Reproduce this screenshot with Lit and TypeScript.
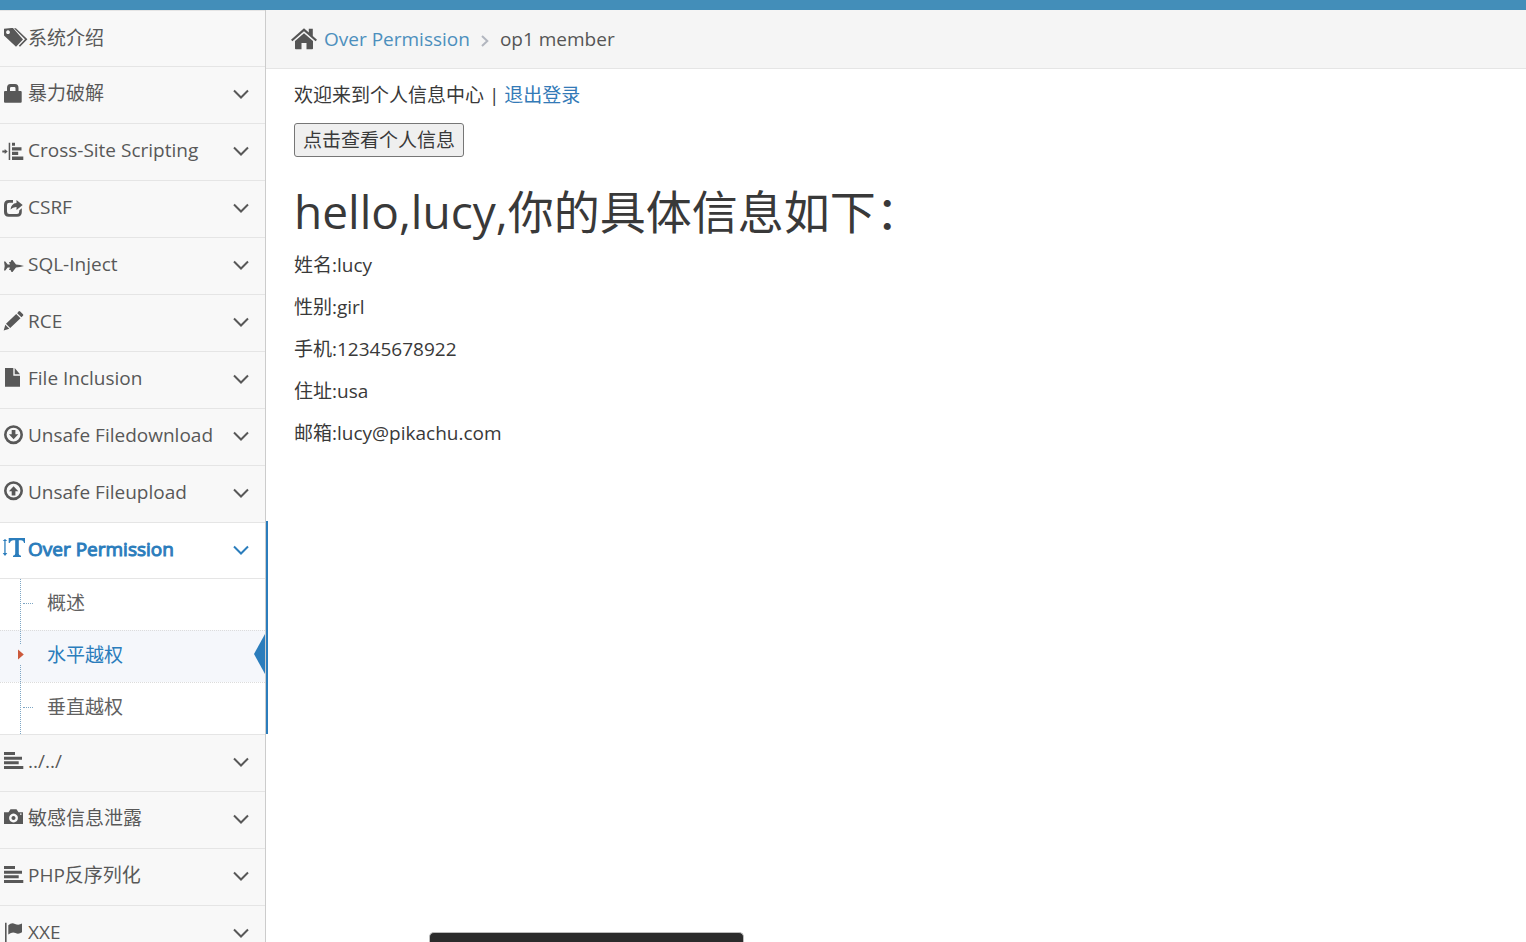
import { LitElement, html, svg, css, nothing, SVGTemplateResult } from "lit";
import { customElement, property } from "lit/decorators.js";
import { classMap } from "lit/directives/class-map.js";

const bars = svg`<path d="M4 1h11v3H4zM4 5.700h18v3H4zM4 10.300h14.700v3H4zM4 15h19.300v3H4z"/>`;

const icons: Record<string, SVGTemplateResult> = {
  tags: svg`<path fill-rule="evenodd" d="M4 .8 11.500 0H13L23 11.500 16 18.800 4 7.500zM8 2.300a1.900 1.900 0 1 0 .01 0z"/>
    <path d="M14 .3h1.900l11.500 11-7.400 7.500-1.200-1.100 6.200-6.400z"/>`,
  lock: svg`<path fill-rule="evenodd" d="M5 8h2V5q0-4 3.500-4h4.500Q18.500 1 18.500 5v3h2.200q1 0 1 1v9.700q0 1-1 1H5q-1 0-1-1V9q0-1 1-1zM10 8h5.500V5.300q0-1.300-1.200-1.300h-3.100Q10 4 10 5.300z"/>`,
  indent: svg`<path d="M8.700 2.700h1.500V20H8.700zM12 2.700h3v3h-3zM12 7.200h9.500v3.200H12zM12 11.800h6.200v3.200H12zM12 16.600h11.300V20H12zM2.300 10.500h2.400V9l3 2.500-3 2.500v-1.500H2.300z"/>`,
  share: svg`<path d="M13 3v2.800H9.200Q7 5.800 7 8v6.500Q7 17 9.200 17H17q2.200 0 2.200-2.200V13.500l2.600-2.200V15q0 4.700-4.700 4.700H8.700Q4 19.700 4 15V7.700Q4 3 8.700 3z"/>
    <path d="M16.500 3 22.700 8l-6.200 5v-3q-3.500-.2-6 2.500.7-6 6-6.500z"/>`,
  plane: svg`<path d="M4 7.500h1.300L7.700 10.500H10L9 8h1.500l1-2h1l3.500 4.600 4 .3 4 1.100-4 1.100-4 .3L12.500 18h-1l-1-2H9l1-2.500H7.700l-2.400 3H4l.7-4.500z"/>`,
  pencil: svg`<path d="M18.500.4Q19.300-.3 20.200.5L23 3.300q.7.800 0 1.500L21.400 6.300 17.200 2.200zM16.200 3.100l4.300 4.200L10.200 17 6 12.800zM5.300 13.700l4 4L3.700 19.500z"/>`,
  file: svg`<path d="M5 0h8.300v7.700H20v11H5zM14.700 0 20 6.300h-5.300z"/>`,
  download: svg`<circle cx="13.500" cy="9.700" r="8.200" fill="none" stroke="currentColor" stroke-width="2.600"/><path d="M11.700 5h3.700v4.300h2.900l-4.700 5-4.700-5h2.800z"/>`,
  upload: svg`<circle cx="13.500" cy="8.700" r="8.200" fill="none" stroke="currentColor" stroke-width="2.600"/><path d="M11.700 13.500h3.700V9.200h2.900l-4.700-5-4.700 5h2.800z"/>`,
  height: svg`<path d="M4.300 2v12H2.700L5 17l2.300-3H5.600V2h1.700L5 0 2.700 2zM8.700-1H25v5h-1q-.5-2.800-3-2.800h-2.200v13.600q0 1.700 2.200 1.900V18h-8v-1.300q2.200-.2 2.200-1.900V1.200H13Q10.500 1.200 9.700 4h-1z"/>`,
  bars,
  camera: svg`<path fill-rule="evenodd" d="M4 4.300h4.500l2-3h6l2 3H23V16H4zM13.500 5.600a4.400 4.400 0 1 0 .01 0zM13.500 8a2 2 0 1 1-.01 0zM20 5.500v1.300h1.500V5.500z"/>`,
  flag: svg`<path d="M5 .7h1.600V20H5zM8.300 3.200q3.200-3 6.700-1.300t7-.3v8.700q-3.300 2.200-6.500.8t-7.200 1.300z"/>`,
};

interface Entry {
  label: string;
  icon: string;
  leaf?: boolean;
  children?: { label: string; current?: boolean }[];
}

const entries: Entry[] = [
  { label: "系统介绍", icon: "tags", leaf: true },
  { label: "暴力破解", icon: "lock" },
  { label: "Cross-Site Scripting", icon: "indent" },
  { label: "CSRF", icon: "share" },
  { label: "SQL-Inject", icon: "plane" },
  { label: "RCE", icon: "pencil" },
  { label: "File Inclusion", icon: "file" },
  { label: "Unsafe Filedownload", icon: "download" },
  { label: "Unsafe Fileupload", icon: "upload" },
  {
    label: "Over Permission",
    icon: "height",
    children: [{ label: "概述" }, { label: "水平越权", current: true }, { label: "垂直越权" }],
  },
  { label: "../../", icon: "bars" },
  { label: "敏感信息泄露", icon: "camera" },
  { label: "PHP反序列化", icon: "bars" },
  { label: "XXE", icon: "flag" },
];

@customElement("side-menu")
class SideMenu extends LitElement {
  @property({ attribute: false }) entries: Entry[] = [];

  static styles = css`
    :host {
      display: block;
      background: #f8f8f8;
      border-right: 1px solid #ccc;
      color: #585858;
    }
    ul {
      list-style: none;
      margin: 0;
      padding: 0;
    }
    a {
      color: inherit;
      text-decoration: none;
    }
    .menu {
      border-top: 1px solid #e5e5e5;
    }
    .item {
      position: relative;
      border-bottom: 1px solid #e5e5e5;
    }
    .head {
      display: flex;
      align-items: center;
      padding: 14px 16px 18px 0;
      line-height: 24px;
    }
    .item:first-child .head {
      padding: 15px 16px 16px 0;
    }
    .icon {
      flex: none;
      width: 28px;
      height: 24px;
      overflow: visible;
      fill: currentColor;
    }
    .label {
      flex: 1;
    }
    .arrow {
      flex: none;
      width: 16px;
      height: 24px;
      fill: none;
      stroke: currentColor;
      stroke-width: 2;
    }
    .open {
      background: #fff;
    }
    .open::after {
      content: "";
      position: absolute;
      z-index: 1;
      top: -2px;
      bottom: 0;
      right: -3px;
      width: 2px;
      background: #2b7dbc;
    }
    .open .head {
      padding-bottom: 17px;
      color: #2b7dbc;
    }
    .open .label {
      -webkit-text-stroke: 1px currentColor;
    }
    .sub {
      position: relative;
      border-top: 1px solid #e5e5e5;
    }
    .sub::before {
      content: "";
      position: absolute;
      z-index: 1;
      top: 0;
      bottom: 0;
      left: 20px;
      border-left: 1px dotted #7ea6c4;
    }
    .leaf {
      position: relative;
      color: #616161;
    }
    .leaf + .leaf {
      border-top: 1px dotted #dcdcdc;
    }
    .leaf a {
      display: block;
      padding: 12px 0 15px 47px;
      line-height: 24px;
    }
    .leaf::before {
      content: "";
      position: absolute;
      top: 24px;
      left: 23px;
      width: 10px;
      border-top: 1px dotted #7ea6c4;
    }
    .current {
      background: #f5f7fb;
      color: #2b7dbc;
    }
    .current::before {
      display: none;
    }
    .caret {
      position: absolute;
      z-index: 2;
      top: 14px;
      left: 17px;
      width: 7px;
      height: 20px;
      background: #f5f7fb;
      fill: #cc5a3c;
    }
    .pointer {
      position: absolute;
      top: 3px;
      right: 0;
      width: 11px;
      height: 40px;
      fill: #2b7dbc;
    }
  `;

  private renderEntry(entry: Entry) {
    return html`<li class=${classMap({ item: true, open: !!entry.children })}>
      <a class="head" href="#">
        <svg class="icon" viewBox="0 -2 28 24" aria-hidden="true">${icons[entry.icon]}</svg>
        <span class="label">${entry.label}</span>
        ${entry.leaf
          ? nothing
          : html`<svg class="arrow" viewBox="0 0 16 24" aria-hidden="true">
              <path d="M1 9.500 8 16.500 15 9.500" />
            </svg>`}
      </a>
      ${entry.children
        ? html`<ul class="sub">
            ${entry.children.map(
              (c) => html`<li class=${classMap({ leaf: true, current: !!c.current })}>
                <a href="#">${c.label}</a>
                ${c.current
                  ? html`<svg class="caret" viewBox="0 0 7 20" aria-hidden="true"><path d="M1 4.500 6.800 9.500 1 14.500z" /></svg>
                      <svg class="pointer" viewBox="0 0 11 40" aria-hidden="true"><path d="M11 0v40L0 20z" /></svg>`
                  : nothing}
              </li>`
            )}
          </ul>`
        : nothing}
    </li>`;
  }

  render() {
    return html`<nav aria-label="Menu">
      <ul class="menu">
        ${this.entries.map((e) => this.renderEntry(e))}
      </ul>
    </nav>`;
  }
}

@customElement("app-root")
class AppRoot extends LitElement {
  static styles = css`
    :host {
      display: flex;
      flex-direction: column;
      height: 100vh;
      overflow: hidden;
      background: #fff;
      color: #393939;
      font-family: "Open Sans", "Noto Sans CJK SC", sans-serif;
      font-size: 19px;
      line-height: 28px;
    }
    .topbar {
      flex: none;
      height: 10px;
      background: #438eb9;
    }
    .shell {
      flex: 1;
      min-height: 0;
      display: grid;
      grid-template-columns: 266px 1fr;
    }
    .crumbs {
      display: flex;
      align-items: center;
      padding: 15px 25px;
      background: #f5f5f5;
      border-bottom: 1px solid #e5e5e5;
      color: #555;
    }
    .home {
      width: 26px;
      height: 22px;
      margin-right: 7px;
      fill: #555;
    }
    .crumbs a {
      color: #4c8fbd;
      text-decoration: none;
    }
    .sep {
      width: 8px;
      height: 12px;
      margin: 4px 11px 0;
      fill: none;
      stroke: #b2b6bf;
      stroke-width: 2;
    }
    .content {
      padding: 12px 28px;
    }
    .content a {
      color: #337ab7;
      text-decoration: none;
    }
    p {
      margin: 0 0 14px;
    }
    .view {
      display: block;
      padding: 2px 8px;
      border: 1px solid #767676;
      border-radius: 3px;
      background: #efefef;
      color: inherit;
      font: inherit;
    }
    h1 {
      margin: 26px 0 12px;
      font-size: 46px;
      line-height: 56px;
      font-weight: 400;
    }
    .dock {
      position: fixed;
      bottom: 0;
      left: 429px;
      width: 313px;
      height: 9px;
      border: 1px solid #bbb;
      border-bottom: 0;
      border-radius: 5px 5px 0 0;
      background: #2b2b2b;
    }
  `;

  render() {
    return html`
      <div class="topbar"></div>
      <div class="shell">
        <side-menu .entries=${entries}></side-menu>
        <main>
          <div class="crumbs">
            <svg class="home" viewBox="0 0 26 22" aria-hidden="true">
              <path d="M13 5.200 22 13v7.500q0 .8-.8.8h-5.700V15h-5v6.300H4.800q-.8 0-.8-.8V13z" />
              <path d="M13 .3 17.800 4.500V.8h4v7.200L26 11.700 24.600 13.300 13 3.300 1.400 13.300 0 11.700z" />
            </svg>
            <a href="#">Over Permission</a>
            <svg class="sep" viewBox="0 0 8 12" aria-hidden="true"><path d="M1 1 6.300 6 1 11" /></svg>
            <span>op1 member</span>
          </div>
          <div class="content">
            <p>欢迎来到个人信息中心 | <a href="#">退出登录</a></p>
            <button class="view" type="button">点击查看个人信息</button>
            <h1>hello,lucy,你的具体信息如下：</h1>
            <p>姓名:lucy</p>
            <p>性别:girl</p>
            <p>手机:12345678922</p>
            <p>住址:usa</p>
            <p>邮箱:lucy@pikachu.com</p>
          </div>
        </main>
      </div>
      <div class="dock"></div>
    `;
  }
}
